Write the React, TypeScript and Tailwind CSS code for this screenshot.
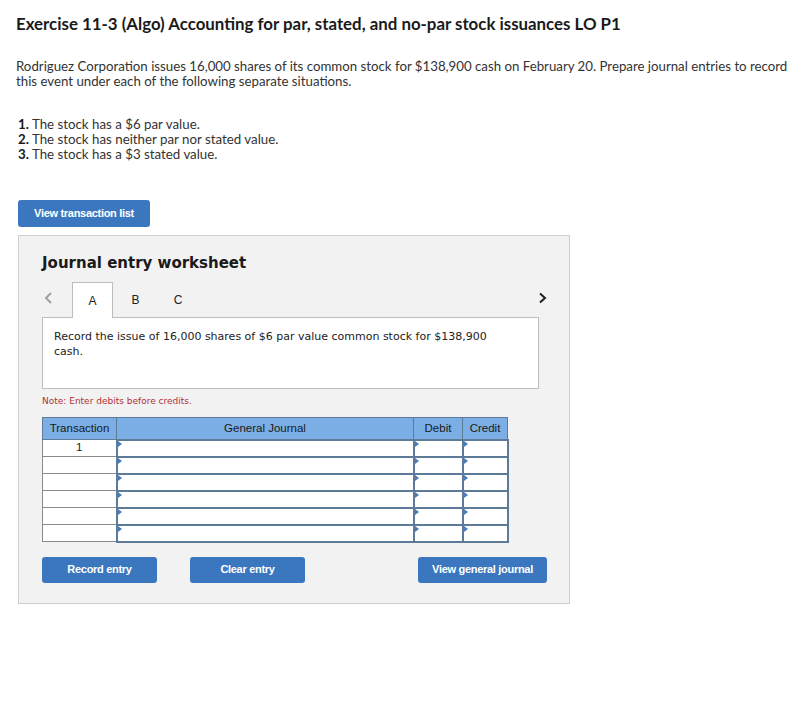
import type { ReactNode } from "react";

const situations = [
  "The stock has a $6 par value.",
  "The stock has neither par nor stated value.",
  "The stock has a $3 stated value.",
];

function BlueButton({ children, className = "" }: { children: ReactNode; className?: string }) {
  return (
    <button
      className={`h-[26px] rounded-[3px] bg-[#3b77bf] text-white text-[11px] font-bold font-['Liberation_Sans',Arial,sans-serif] tracking-[-0.3px] ${className}`}
    >
      {children}
    </button>
  );
}

function Chevron({ dir, className }: { dir: "left" | "right"; className: string }) {
  return (
    <svg width="9" height="12" viewBox="0 0 9 12" fill="none" className={className}>
      <polyline
        points={dir === "left" ? "7,1 2,6 7,11" : "2,1.5 7,6 2,10.5"}
        stroke="currentColor"
        strokeWidth="2"
      />
    </svg>
  );
}

// input cell with the little blue marker in its top-left corner
function EntryCell() {
  return (
    <td className="relative h-[17px] border-[2.5px] border-[#5d7b99] bg-white p-0">
      <span className="absolute left-0 top-0 h-0 w-0 border-y-[3px] border-l-[4px] border-y-transparent border-l-[#4a7cb8]" />
    </td>
  );
}

export default function App() {
  return (
    <div className="min-h-screen bg-white pl-4 pr-2 pt-[14px] font-['Lato',sans-serif] text-[#222]">
      <h1 className="text-[16.85px] font-bold leading-5 text-[#1a1a1a]">
        Exercise 11-3 (Algo) Accounting for par, stated, and no-par stock issuances LO P1
      </h1>

      <p className="mt-[25px] text-[13.25px] leading-[15px] text-[#333]">
        Rodriguez Corporation issues 16,000 shares of its common stock for $138,900 cash on February 20. Prepare journal entries to record this event under each of the following separate situations.
      </p>

      <ol className="mt-[28px] pl-[2px] text-[13.3px] leading-[15px] text-[#333]">
        {situations.map((s, i) => (
          <li key={i}>
            <span className="font-bold text-[#1a1a1a]">{i + 1}.</span> {s}
          </li>
        ))}
      </ol>

      <BlueButton className="ml-[2px] mt-[38px] block w-[132px] h-[27px]">View transaction list</BlueButton>

      <div className="ml-[2px] mt-[8px] w-[552px] border border-[#cfcfcf] bg-[#f2f2f2] pb-[20px] pl-[23px] pt-[17px]">
        <h2 className="text-[15px] font-bold leading-5 text-[#1a1a1a] font-['DejaVu_Sans',Verdana,sans-serif]">
          Journal entry worksheet
        </h2>

        {/* tab strip */}
        <div className="mt-[9px] flex h-[35px] w-[505px] items-center font-['Liberation_Sans',Arial,sans-serif] text-[12px] text-[#222]">
          <div className="w-[30px] pl-[2px] text-[#a0a0a0]">
            <Chevron dir="left" className="-mt-[3px]" />
          </div>
          <div className="relative -mb-px flex h-[36px] w-[41px] items-center justify-center self-end border border-b-0 border-[#bdbdbd] bg-white">
            A
          </div>
          <span className="w-[45px] text-center">B</span>
          <span className="w-[40px] text-center">C</span>
          <div className="ml-auto text-[#1f1f1f]">
            <Chevron dir="right" className="-mt-[3px]" />
          </div>
        </div>

        <div className="h-[72px] w-[497px] border border-[#bdbdbd] bg-white pl-[11px] pr-[40px] pt-[11px] font-['DejaVu_Sans',Verdana,sans-serif] text-[11px] leading-[15px] text-[#222]">
          Record the issue of 16,000 shares of $6 par value common stock for $138,900 cash.
        </div>

        <p className="mt-[4px] font-['DejaVu_Sans',Verdana,sans-serif] text-[9px] leading-4 text-[#b0303a]">
          Note: Enter debits before credits.
        </p>

        <table className="mt-[8px] w-[465px] table-fixed border-collapse font-['Liberation_Sans',Arial,sans-serif] text-[11.5px] text-[#1a1a1a]">
          <colgroup>
            <col className="w-[74px]" />
            <col className="w-[297px]" />
            <col className="w-[49px]" />
            <col className="w-[45px]" />
          </colgroup>
          <thead>
            <tr className="h-[22px] bg-[#7aaee4]">
              <th className="border border-[#5d7b99] font-normal">Transaction</th>
              <th className="border border-[#5d7b99] font-normal">General Journal</th>
              <th className="border border-[#5d7b99] font-normal">Debit</th>
              <th className="border border-[#5d7b99] font-normal">Credit</th>
            </tr>
          </thead>
          <tbody>
            {[0, 1, 2, 3, 4, 5].map((r) => (
              <tr key={r}>
                <td className="h-[17px] border border-[#8a8a8a] bg-white p-0 text-center align-top leading-[15px]">
                  {r === 0 ? "1" : ""}
                </td>
                <EntryCell />
                <EntryCell />
                <EntryCell />
              </tr>
            ))}
          </tbody>
        </table>

        <div className="mt-[14px] flex w-[505px]">
          <BlueButton className="w-[115px]">Record entry</BlueButton>
          <BlueButton className="ml-[33px] w-[115px]">Clear entry</BlueButton>
          <BlueButton className="ml-auto w-[129px]">View general journal</BlueButton>
        </div>
      </div>
    </div>
  );
}
